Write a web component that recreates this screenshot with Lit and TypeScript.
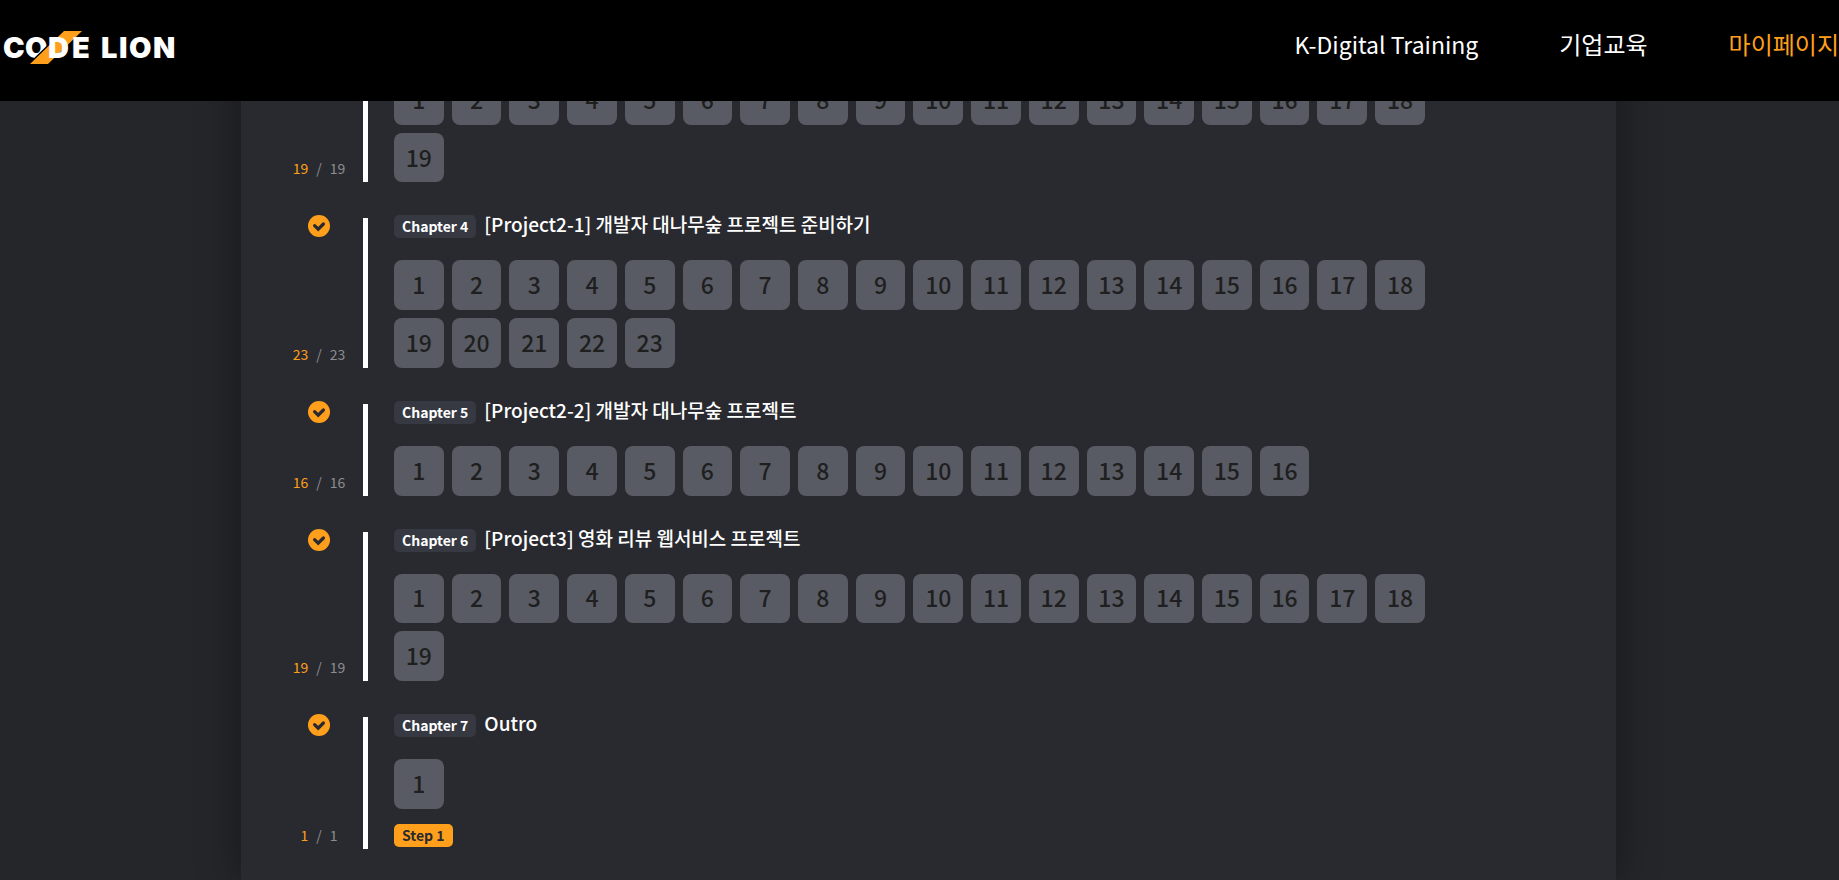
import { LitElement, html, css, svg, nothing } from "lit";
import { customElement, property } from "lit/decorators.js";

interface Chapter {
  label?: string;
  title?: string;
  lessons: number;
  step?: string;
}

const CHAPTERS: Chapter[] = [
  { lessons: 19 },
  { label: "Chapter 4", title: "[Project2-1] 개발자 대나무숲 프로젝트 준비하기", lessons: 23 },
  { label: "Chapter 5", title: "[Project2-2] 개발자 대나무숲 프로젝트", lessons: 16 },
  { label: "Chapter 6", title: "[Project3] 영화 리뷰 웹서비스 프로젝트", lessons: 19 },
  { label: "Chapter 7", title: "Outro", lessons: 1, step: "Step 1" },
];

const logo = svg`
  <svg class="logo" viewBox="0 0 180 40" role="img" aria-label="CODE LION">
    <g class="word">
      <text x="3" y="31">C</text>
      <text x="25" y="31">O</text>
    </g>
    <path d="M62 4H82L48 37H28Z" fill="#000"/>
    <path d="M64 4H82L48 37H30Z" fill="#ff9f1c"/>
    <g class="word">
      <text x="48" y="31">D</text>
      <text x="72" y="31">E</text>
      <text x="101" y="31">L</text>
      <text x="119" y="31">I</text>
      <text x="129" y="31">O</text>
      <text x="153" y="31">N</text>
    </g>
  </svg>`;

const check = html`
  <svg class="check" viewBox="0 0 22 22" role="img" aria-label="완료">
    <circle cx="11" cy="11" r="11" fill="#ff9f1c"/>
    <path d="M6.6 10.6L10.2 14.2L15.4 9" fill="none" stroke="#292a2f" stroke-width="3.2" stroke-linecap="round"/>
  </svg>`;

@customElement("site-header")
export class SiteHeader extends LitElement {
  static styles = css`
    :host {
      position: fixed;
      inset: 0 0 auto 0;
      z-index: 1;
      display: flex;
      align-items: center;
      justify-content: space-between;
      height: 101px;
      box-sizing: border-box;
      padding-bottom: 8px;
      overflow: hidden;
      background: #000;
      font-family: "Noto Sans CJK KR", sans-serif;
    }
    a { color: #fff; text-decoration: none; white-space: nowrap; }
    .home { display: block; height: 40px; }
    .logo { display: block; width: 180px; height: 40px; }
    .word { font: 900 29px "Inter", sans-serif; fill: #fff; }
    nav {
      display: flex;
      gap: 81px;
      padding-bottom: 6px;
      font-size: 24px;
      line-height: 36px;
    }
    .latin { font-size: 23px; }
    .active { color: #ff9f1c; }
  `;

  render() {
    return html`
      <a class="home" href="#">${logo}</a>
      <nav>
        <a class="latin" href="#">K-Digital Training</a>
        <a href="#">기업교육</a>
        <a class="active" href="#" aria-current="page">마이페이지</a>
      </nav>`;
  }
}

@customElement("chapter-row")
export class ChapterRow extends LitElement {
  @property({ attribute: false }) chapter!: Chapter;

  static styles = css`
    :host { display: grid; grid-template-columns: 88px 5px minmax(0, 1fr); }
    .status {
      display: flex;
      flex-direction: column;
      align-items: center;
      justify-content: flex-end;
    }
    .check { width: 22px; height: 22px; margin: -3px 0 auto; }
    .count {
      display: flex;
      gap: 8px;
      padding-bottom: 2px;
      color: #8c8d92;
      font-size: 14px;
      line-height: 24px;
    }
    .count b { color: #ff9f1c; font-weight: 400; }
    .bar { background: #fff; }
    .body { padding-left: 26px; }
    .head { display: flex; align-items: flex-start; gap: 8px; height: 23px; margin: -3px 0 22px; }
    .badge {
      padding: 0 8px;
      border-radius: 5px;
      background: #363842;
      color: #fff;
      font-size: 14px;
      font-weight: 700;
      line-height: 23px;
    }
    h2 { margin: 0; color: #fff; font-size: 19px; font-weight: 500; line-height: 18px; }
    .tiles {
      display: grid;
      grid-template-columns: repeat(18, minmax(0, 1fr));
      gap: 8px;
    }
    .tile {
      display: flex;
      align-items: center;
      justify-content: center;
      aspect-ratio: 1;
      box-sizing: border-box;
      padding: 0 0 2px;
      border: 0;
      border-radius: 8px;
      background: #595b64;
      color: #1f1f20;
      font: 500 23px "Noto Sans CJK KR", sans-serif;
    }
    .step { display: flex; padding: 15px 0 2px; }
    .step .badge { background: #ff9f1c; color: #292a2f; }
  `;

  render() {
    const { label, title, lessons, step } = this.chapter;
    return html`
      <div class="status">
        ${label ? check : nothing}
        <div class="count"><b>${lessons}</b><span>/</span><span>${lessons}</span></div>
      </div>
      <div class="bar"></div>
      <div class="body">
        ${label
          ? html`<div class="head"><span class="badge">${label}</span><h2>${title}</h2></div>`
          : nothing}
        <div class="tiles">
          ${Array.from({ length: lessons }, (_, i) => html`<button class="tile">${i + 1}</button>`)}
        </div>
        ${step ? html`<div class="step"><span class="badge">${step}</span></div>` : nothing}
      </div>`;
  }
}

@customElement("app-root")
export class AppRoot extends LitElement {
  static styles = css`
    :host {
      display: grid;
      grid-template-columns: 241fr 1375fr 223fr;
      min-height: 100vh;
      overflow: hidden;
      background: #25262a;
      font-family: "Noto Sans CJK KR", sans-serif;
    }
    main {
      grid-column: 2;
      display: flex;
      flex-direction: column;
      gap: 36px;
      box-sizing: border-box;
      padding: 75px 13.9% 24px 34px;
      background: #292a2f;
      box-shadow: 0 0 40px rgba(0, 0, 0, 0.4);
    }
  `;

  render() {
    return html`
      <site-header></site-header>
      <main>
        ${CHAPTERS.map((chapter) => html`<chapter-row .chapter=${chapter}></chapter-row>`)}
      </main>`;
  }
}
